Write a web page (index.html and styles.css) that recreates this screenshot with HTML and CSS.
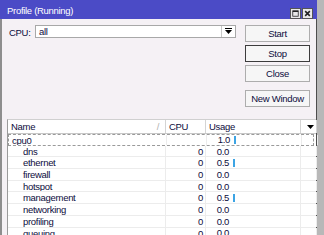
FILE: index.html
```html
<!DOCTYPE html>
<html lang="en">
<head>
    <meta charset="UTF-8">
    <title>Profile (Running)</title>
    <link rel="stylesheet" href="styles.css">
</head>
<body>
    <div class="window">
        <div class="titlebar">
            <span class="title">Profile (Running)</span>
            <div class="title-btns">
                <span class="tbtn"><svg width="9" height="9" viewBox="0 0 9 9"><rect x="1" y="1" width="7" height="7" fill="none" stroke="#222" stroke-width="1"/><line x1="1" y1="1.8" x2="8" y2="1.8" stroke="#222" stroke-width="1.5"/></svg></span>
                <span class="tbtn"><svg width="9" height="9" viewBox="0 0 9 9"><path d="M1.5 1.5 L7.5 7.5 M7.5 1.5 L1.5 7.5" stroke="#222" stroke-width="2"/></svg></span>
            </div>
        </div>

        <div class="content">
            <div class="top">
                <div class="cpu-row">
                    <label>CPU:</label>
                    <div class="select">
                        <span class="select-value">all</span>
                        <span class="select-btn"><svg width="7" height="7" viewBox="0 0 7 7"><rect x="0" y="0" width="7" height="1" fill="#000"/><path d="M0 2 L7 2 L3.5 6 Z" fill="#000"/></svg></span>
                    </div>
                </div>
                <div class="buttons">
                    <button class="btn">Start</button>
                    <button class="btn focused">Stop</button>
                    <button class="btn">Close</button>
                    <button class="btn spaced">New Window</button>
                </div>
            </div>

            <!-- profile list -->
            <div class="table">
                <div class="row head">
                    <div class="cell name">Name<span class="sort">/</span></div>
                    <div class="cell">CPU</div>
                    <div class="cell">Usage</div>
                    <div class="cell menu"><svg width="7" height="4" viewBox="0 0 7 4"><path d="M0 0 L7 0 L3.5 4 Z" fill="#000"/></svg></div>
                </div>
                <div class="row selected">
                    <div class="cell name">cpu0</div>
                    <div class="cell num"></div>
                    <div class="cell usage"><span class="val">1.0</span><span class="bar"></span></div>
                    <div class="cell"></div>
                </div>
                <div class="row">
                    <div class="cell name child">dns</div>
                    <div class="cell num">0</div>
                    <div class="cell usage"><span class="val">0.0</span></div>
                    <div class="cell"></div>
                </div>
                <div class="row">
                    <div class="cell name child">ethernet</div>
                    <div class="cell num">0</div>
                    <div class="cell usage"><span class="val">0.5</span><span class="bar"></span></div>
                    <div class="cell"></div>
                </div>
                <div class="row">
                    <div class="cell name child">firewall</div>
                    <div class="cell num">0</div>
                    <div class="cell usage"><span class="val">0.0</span></div>
                    <div class="cell"></div>
                </div>
                <div class="row">
                    <div class="cell name child">hotspot</div>
                    <div class="cell num">0</div>
                    <div class="cell usage"><span class="val">0.0</span></div>
                    <div class="cell"></div>
                </div>
                <div class="row">
                    <div class="cell name child">management</div>
                    <div class="cell num">0</div>
                    <div class="cell usage"><span class="val">0.5</span><span class="bar"></span></div>
                    <div class="cell"></div>
                </div>
                <div class="row">
                    <div class="cell name child">networking</div>
                    <div class="cell num">0</div>
                    <div class="cell usage"><span class="val">0.0</span></div>
                    <div class="cell"></div>
                </div>
                <div class="row">
                    <div class="cell name child">profiling</div>
                    <div class="cell num">0</div>
                    <div class="cell usage"><span class="val">0.0</span></div>
                    <div class="cell"></div>
                </div>
                <div class="row">
                    <div class="cell name child">queuing</div>
                    <div class="cell num">0</div>
                    <div class="cell usage"><span class="val">0.0</span></div>
                    <div class="cell"></div>
                </div>
            </div>
        </div>
    </div>
</body>
</html>
```

FILE: styles.css
```css
/* Winbox style profile window */
body { margin: 0; background: #b8b8b8; font-family: "Liberation Sans", Arial, sans-serif; font-size: 9.5px; letter-spacing: -0.3px; color: #0c0c3c; overflow: hidden; height: 235px; }
.window { width: 317px; height: 235px; display: flex; flex-direction: column; }
.titlebar { height: 21px; background: #4b4bc6; color: #fff; display: flex; justify-content: space-between; padding: 0 0 0 7px; box-sizing: border-box; }
.title { padding-top: 5px; }
.title-btns { display: flex; gap: 1px; padding: 8px 4px 0 0; }
.tbtn { width: 11px; height: 11px; background: #e8e8e8; border: 1px solid #555; box-sizing: border-box; display: flex; align-items: center; justify-content: center; }
.tbtn svg { width: 7px; height: 7px; }
.content { flex: 1; background: #f5f1f5; border-left: 2px solid #8e8e8e; border-right: 1px solid #4e4e4e; }
.top { display: flex; padding: 6px 6px 0 7px; }
.cpu-row { display: flex; align-items: flex-start; }
.cpu-row label { width: 26px; padding-top: 2px; }
.select { width: 201px; height: 13px; background: #fff; border: 1px solid #a8a8a8; box-sizing: border-box; display: flex; justify-content: space-between; }
.select-value { padding: 0 0 0 3px; line-height: 11px; }
.select-btn { width: 13px; border-left: 1px solid #c8c8c8; display: flex; align-items: center; justify-content: center; }
.buttons { margin-left: auto; width: 65px; display: flex; flex-direction: column; gap: 3px; }
.btn { height: 17px; padding: 0; background: #f6f6f6; border: 1px solid #adadad; font: inherit; color: inherit; letter-spacing: inherit; }
.btn.focused { border-color: #3c3c3c; }
.btn.spaced { margin-top: 5px; }
.table { margin: 12px 0 0 5px; background: #fff; border-left: 1px solid #9a9a9a; border-top: 1px solid #d0d0d0; }
.row { display: grid; grid-template-columns: 158px 40px 95px 16px; height: 11.7px; line-height: 11px; border-bottom: 1px solid #ececec; box-sizing: border-box; }
.row.head { height: 14px; line-height: 13px; border-bottom: 1px solid #c8c8c8; }
.row.head .cell { border-right: 1px solid #d4d4d4; padding-left: 3px; }
.row.selected { border: 1px dashed #9a9a9a; margin-right: 2px; }
.cell { border-right: 1px solid #ececec; box-sizing: border-box; overflow: hidden; white-space: nowrap; position: relative; }
.cell.name { padding-left: 3px; }
.cell.child { padding-left: 15px; }
.sort { position: absolute; right: 6px; top: 0; color: #b0b0b0; }
.cell.menu { display: flex; align-items: center; justify-content: center; border-right: none; }
.cell.num { text-align: right; padding-right: 2px; }
.cell.usage { display: flex; align-items: center; }
.val { width: 23px; text-align: right; }
.bar { width: 2px; height: 8px; background: #3ca4e4; margin-left: 4px; }
```
